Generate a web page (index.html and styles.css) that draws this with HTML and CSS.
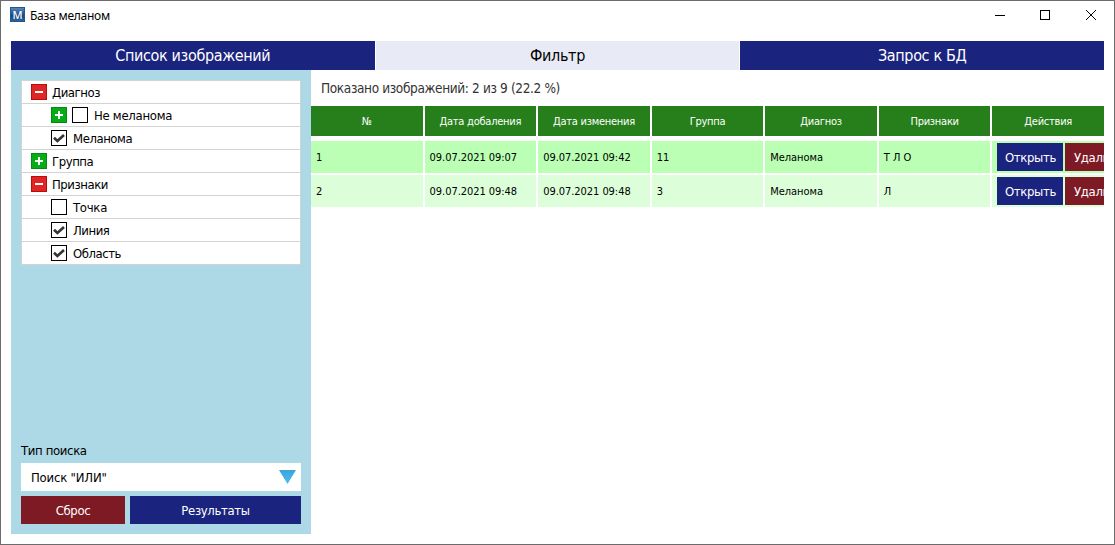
FILE: index.html
```html
<!DOCTYPE html>
<html lang="ru">
<head>
<meta charset="utf-8">
<title>База меланом</title>
<link rel="stylesheet" href="styles.css">
</head>
<body>
<div class="window">
  <header class="titlebar">
    <span class="app-icon">M</span>
    <span class="app-title">База меланом</span>
    <svg class="window-controls" width="106" height="12" viewBox="0 0 106 12" fill="none" stroke="#000" shape-rendering="crispEdges">
      <path d="M0 5.5h10M45.5.5h9v9h-9z"/>
      <path d="M91 0l10 10M101 0L91 10" shape-rendering="auto"/>
    </svg>
  </header>
  <nav class="tabs">
    <div class="tab">Список изображений</div>
    <div class="tab active">Фильтр</div>
    <div class="tab">Запрос к БД</div>
  </nav>
  <div class="content">
    <aside class="sidebar">
      <ul class="tree">
        <li><i class="toggle minus"></i><span>Диагноз</span></li>
        <li class="child"><i class="toggle plus"></i><i class="check"></i><span class="wide">Не меланома</span></li>
        <li class="child"><i class="check"><svg width="14" height="14" viewBox="0 0 14 14"><path d="M2 6.8l3.4 3.1L12 4"/></svg></i><span>Меланома</span></li>
        <li><i class="toggle plus"></i><span>Группа</span></li>
        <li><i class="toggle minus"></i><span>Признаки</span></li>
        <li class="child"><i class="check"></i><span class="wide">Точка</span></li>
        <li class="child"><i class="check"><svg width="14" height="14" viewBox="0 0 14 14"><path d="M2 6.8l3.4 3.1L12 4"/></svg></i><span>Линия</span></li>
        <li class="child"><i class="check"><svg width="14" height="14" viewBox="0 0 14 14"><path d="M2 6.8l3.4 3.1L12 4"/></svg></i><span>Область</span></li>
      </ul>
      <div class="search">
        <div class="search-label">Тип поиска</div>
        <div class="select"><span>Поиск "ИЛИ"</span><i class="arrow"></i></div>
        <div class="buttons">
          <div class="button danger">Сброс</div>
          <div class="button primary">Результаты</div>
        </div>
      </div>
    </aside>
    <main class="results">
      <div class="summary">Показано изображений: 2 из 9 (22.2 %)</div>
      <div class="row head">
        <div>№</div><div>Дата добаления</div><div>Дата изменения</div><div>Группа</div><div>Диагноз</div><div>Признаки</div><div>Действия</div>
      </div>
      <div class="row odd">
        <div>1</div><div>09.07.2021 09:07</div><div>09.07.2021 09:42</div><div>11</div><div>Меланома</div><div>Т Л О</div>
        <div class="actions"><span class="button primary">Открыть</span><span class="button danger">Удалить</span></div>
      </div>
      <div class="row even">
        <div>2</div><div>09.07.2021 09:48</div><div>09.07.2021 09:48</div><div>3</div><div>Меланома</div><div>Л</div>
        <div class="actions"><span class="button primary">Открыть</span><span class="button danger">Удалить</span></div>
      </div>
    </main>
  </div>
</div>
</body>
</html>
```
FILE: styles.css
```css
* { box-sizing: border-box; }
body { margin: 0; background: #fff; color: #000; font-family: "DejaVu Sans Condensed", "DejaVu Sans", sans-serif; font-stretch: condensed; font-size: 13px; }
.window { width: 1115px; height: 545px; border: 1px solid #6d6b6c; padding: 0 10px 10px; display: flex; flex-direction: column; overflow: hidden; }
.titlebar { height: 40px; display: flex; align-items: flex-start; flex: none; }
.app-icon { width: 15px; height: 15px; margin: 6px 5px 0 -1px; background: linear-gradient(#5685ba, #17457f 60%, #2767a3); border: 1px solid #285587; color: #fff; font: 500 11px/13px "Noto Sans", sans-serif; display: flex; justify-content: center; }
.app-title { font-family: "Noto Sans", sans-serif; font-size: 12px; line-height: 16px; margin-top: 7px; letter-spacing: -.25px; }
.window-controls { margin: 9px 3px 0 auto; }
.tabs { display: grid; grid-template-columns: repeat(3, 1fr); gap: 1px; height: 29px; flex: none; }
.tab { height: 29px; padding-top: 1px; background: #1a237e; color: #fff; font-size: 16px; line-height: 28px; text-align: center; letter-spacing: -.35px; }
.tab.active { background: #e8eaf6; color: #000; }
.content { display: flex; flex: 1; min-height: 0; }
.sidebar { width: 300px; flex: none; background: #add8e6; padding: 10px; display: flex; flex-direction: column; justify-content: space-between; }
.tree { list-style: none; margin: 0; padding: 0; border: 1px solid #d3d3d3; border-bottom: 0; background: #fff; letter-spacing: -.45px; }
.tree .wide { letter-spacing: -.28px; }
.tree li { height: 23px; border-bottom: 1px solid #d3d3d3; display: flex; align-items: center; gap: 5px; padding-left: 9px; }
.tree li.child { padding-left: 29px; }
.tree .check + span { margin-left: 1px; }
.toggle, .check { width: 16px; height: 16px; flex: none; }
.toggle { background: linear-gradient(#fff, #fff) center / 8px 2px no-repeat, #e02525; border: 1px solid #b90d0d; }
.toggle.plus { background: linear-gradient(#fff, #fff) center / 8px 2px no-repeat, linear-gradient(#fff, #fff) center / 2px 8px no-repeat, #06ad17; border-color: #078713; }
.check { border: 1px solid #000; background: #fff; }
.check svg { display: block; fill: none; stroke: #383335; stroke-width: 2.7; }
.search-label { line-height: 16px; margin-bottom: 4px; letter-spacing: -.35px; }
.select { height: 28px; background: #fff; padding: 0 5px 0 10px; display: flex; align-items: center; justify-content: space-between; letter-spacing: -.2px; }
.arrow { width: 17px; height: 14px; background: linear-gradient(#3ca4dc, #50baf0); clip-path: polygon(0 0, 100% 0, 50% 100%); }
.buttons { display: grid; grid-template-columns: 104px 1fr; gap: 5px; margin-top: 5px; }
.button { height: 28px; padding-top: 1px; line-height: 28px; color: #fff; text-align: center; letter-spacing: -.35px; }
.primary { background: #1a237e; }
.danger { background: #7e1a23; }
.results { flex: 1; min-width: 0; overflow: hidden; }
.summary { height: 36px; line-height: 36px; padding-left: 10px; color: #333; font-size: 13.5px; letter-spacing: -.36px; }
.row { display: grid; grid-template-columns: repeat(7, minmax(0, 1fr)); gap: 2px; height: 32px; margin-bottom: 2px; font-size: 11px; line-height: 32px; }
.row > div { height: 32px; padding: 1px 0 0 5px; overflow: hidden; white-space: nowrap; letter-spacing: -.05px; }
.row.head { height: 30px; line-height: 30px; margin-bottom: 5px; color: #fff; text-align: center; }
.head > div { height: 30px; background: #267f1a; padding: 1px 0 0; letter-spacing: -.25px; }
.odd > div { background: #baffb3; }
.even > div { background: #dcffd9; }
.row .actions { display: flex; gap: 2px; align-items: center; padding-top: 0; }
.actions .button { width: 66px; flex: none; font-size: 13px; }
```
